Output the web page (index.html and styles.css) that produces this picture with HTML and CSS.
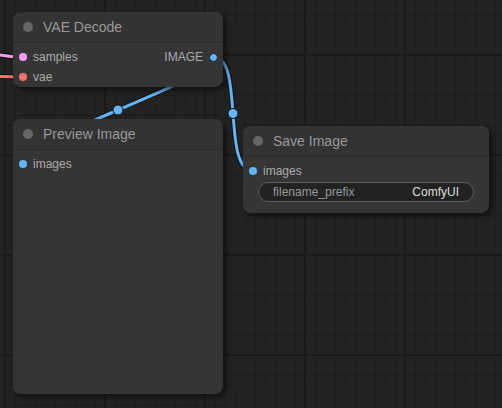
FILE: index.html
```html
<!DOCTYPE html>
<html>
<head>
<meta charset="utf-8">
<link rel="stylesheet" href="styles.css">
</head>
<body>
<div class="canvas">
  <svg class="links" width="502" height="408" viewBox="0 0 502 408">
    <g fill="none" stroke-linecap="round">
      <path class="outline" d="M-60 42 C -20 42, -18 57, 22 57"/>
      <path d="M-60 42 C -20 42, -18 57, 22 57" stroke="#ff9cf9" stroke-width="3"/>
      <path class="outline" d="M-60 74 C -20 74, -18 77, 22 77"/>
      <path d="M-60 74 C -20 74, -18 77, 22 77" stroke="#ff6e6e" stroke-width="3"/>
      <path class="outline" d="M214 57 C268.8 57, -32.8 163, 22 163"/>
      <path d="M214 57 C268.8 57, -32.8 163, 22 163" stroke="#64b5f6" stroke-width="3"/>
      <path class="outline" d="M214 57 C243.8 57, 222.2 170, 252 170"/>
      <path d="M214 57 C243.8 57, 222.2 170, 252 170" stroke="#64b5f6" stroke-width="3"/>
    </g>
    <circle cx="118" cy="110" r="5" fill="#64b5f6" stroke="#111" stroke-width="1"/>
    <circle cx="233" cy="113.5" r="5" fill="#64b5f6" stroke="#111" stroke-width="1"/>
  </svg>

  <div class="node node-vae">
    <div class="title"><span class="tdot"></span><span class="tname">VAE Decode</span></div>
    <div class="body">
      <div class="row">
        <div class="slot"><span class="dot pink"></span>samples</div>
        <div class="slot out">IMAGE<span class="dot blue ring"></span></div>
      </div>
      <div class="row">
        <div class="slot"><span class="dot red"></span>vae</div>
      </div>
    </div>
  </div>

  <div class="node node-preview">
    <div class="title"><span class="tdot"></span><span class="tname">Preview Image</span></div>
    <div class="body">
      <div class="row">
        <div class="slot"><span class="dot blue"></span>images</div>
      </div>
    </div>
  </div>

  <div class="node node-save">
    <div class="title"><span class="tdot"></span><span class="tname">Save Image</span></div>
    <div class="body">
      <div class="row">
        <div class="slot"><span class="dot blue"></span>images</div>
      </div>
      <div class="widget">
        <span class="wlabel">filename_prefix</span>
        <span class="wvalue">ComfyUI</span>
      </div>
    </div>
  </div>
</div>
</body>
</html>
```
FILE: styles.css
```css
html, body {
  margin: 0;
  padding: 0;
}
body {
  width: 502px;
  height: 408px;
  overflow: hidden;
  font-family: "Liberation Sans", Arial, sans-serif;
}
.canvas {
  position: relative;
  width: 502px;
  height: 408px;
  overflow: hidden;
  background-color: #232323;
  background-image:
    linear-gradient(to right, #1a1a1a 2px, transparent 2px),
    linear-gradient(to bottom, #1a1a1a 2px, transparent 2px),
    linear-gradient(to right, #1e1e1e 1px, transparent 1px),
    linear-gradient(to bottom, #1e1e1e 1px, transparent 1px);
  background-size: 100px 100px, 100px 100px, 10px 10px, 10px 10px;
  background-position: 4px 0, 0 54px, 5px 0, 0 5px;
}
.links {
  position: absolute;
  left: 0;
  top: 0;
}
.links .outline {
  stroke: #111;
  stroke-width: 5;
}
.node {
  position: absolute;
  background: #353535;
  border-radius: 8px;
  box-shadow: 3px 3px 6px rgba(0, 0, 0, 0.55);
  display: flex;
  flex-direction: column;
  box-sizing: border-box;
}
.node-vae { left: 13px; top: 12px; width: 210px; height: 75px; }
.node-preview { left: 13px; top: 119px; width: 210px; height: 275px; }
.node-save { left: 243px; top: 126px; width: 246px; height: 87px; }

.title {
  height: 30px;
  display: flex;
  align-items: center;
  gap: 10px;
  padding-left: 10px;
  background: #333;
  border-radius: 8px 8px 0 0;
  border-bottom: 1px solid #2a2a2a;
}
.tdot {
  width: 10px;
  height: 10px;
  border-radius: 50%;
  background: #666;
}
.tname {
  font-size: 14px;
  color: #999;
}
.body {
  padding-top: 4px;
  display: flex;
  flex-direction: column;
}
.row {
  height: 20px;
  display: flex;
  align-items: center;
  justify-content: space-between;
}
.slot {
  display: flex;
  align-items: center;
  gap: 6px;
  font-size: 12px;
  color: #aaa;
  padding-left: 6px;
}
.slot.out {
  padding-left: 0;
  padding-right: 5px;
}
.dot {
  width: 8px;
  height: 8px;
  border-radius: 50%;
  box-sizing: border-box;
}
.dot.ring {
  border: 1px solid #1b1b1b;
  width: 9px;
  height: 9px;
}
.pink { background: #ff9cf9; }
.red { background: #ff6e6e; }
.blue { background: #64b5f6; }
.widget {
  margin: 1px 15px 0;
  height: 20px;
  box-sizing: border-box;
  border: 1px solid #5f5f5f;
  border-radius: 10px;
  background: #222;
  display: flex;
  align-items: center;
  justify-content: space-between;
  padding: 0 14px;
  font-size: 12px;
}
.wlabel { color: #999; }
.wvalue { color: #ddd; }
```
